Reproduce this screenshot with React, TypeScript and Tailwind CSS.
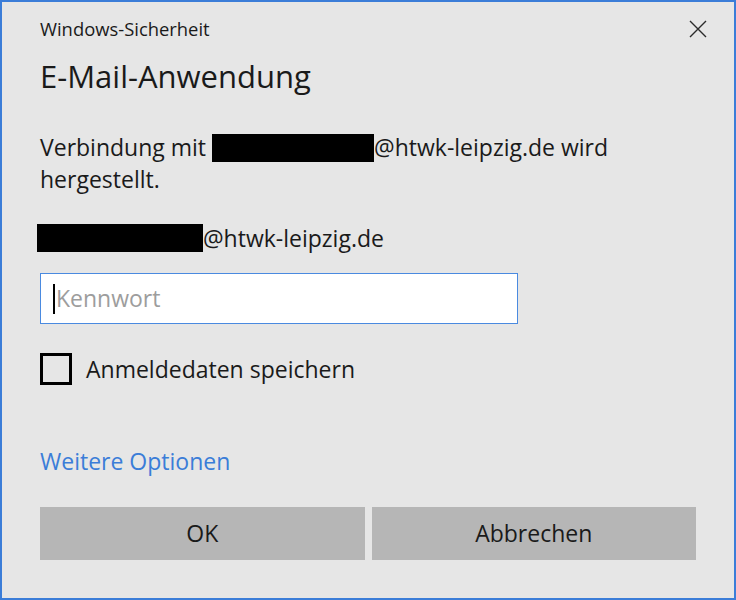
function CloseIcon() {
  return (
    <svg width="18" height="18" viewBox="0 0 18 18" className="text-[#2b2b2b]">
      <path d="M1 1L17 17M17 1L1 17" stroke="currentColor" strokeWidth="1.4" fill="none" />
    </svg>
  );
}

export default function App() {
  return (
    <div
      className="flex h-[600px] w-[736px] flex-col border-2 border-[#3b7dd8] bg-[#e6e6e6] text-[#1a1a1a]"
      style={{ fontFamily: '"Open Sans", "Noto Sans", sans-serif' }}
    >
      {/* Title bar */}
      <div className="flex h-[53px] items-center justify-between pl-[38px] pr-[27px]">
        <span className="text-[18.4px]">Windows-Sicherheit</span>
        <CloseIcon />
      </div>

      <div className="flex flex-1 flex-col px-[38px]">
        <h1 className="text-[31px] leading-[42px]">E-Mail-Anwendung</h1>

        <p className="mt-[31px] text-[23px] leading-[32px]">
          Verbindung mit{" "}
          <span className="inline-block h-[28px] w-[162px] translate-y-[6px] bg-black" />
          @htwk-leipzig.de wird
          <br />
          hergestellt.
        </p>

        <div className="mt-[27px] flex h-[32px] items-center text-[23px] leading-[32px]">
          <span className="-ml-[3px] inline-block h-[28px] w-[166px] bg-black" />
          @htwk-leipzig.de
        </div>

        <div className="mt-[19px] flex h-[51px] w-[478px] items-center border border-[#4a8ae0] bg-white pl-[12px]">
          <span className="h-[30px] w-[2px] bg-black" />
          <span className="ml-[1px] text-[23px] text-[#9d9d9d]">Kennwort</span>
        </div>

        <label className="mt-[29px] flex h-[32px] items-center gap-[14px]">
          <span className="h-[32px] w-[32px] border-[3px] border-black" />
          <span className="text-[23px] leading-[32px]">Anmeldedaten speichern</span>
        </label>

        <a className="mt-[60px] text-[23px] leading-[32px] text-[#3b7dd8]">Weitere Optionen</a>

        <div className="mt-[30px] grid grid-cols-2 gap-[7px]">
          <button type="button" className="h-[53px] bg-[#b6b6b6] text-[23px]">
            OK
          </button>
          <button type="button" className="h-[53px] bg-[#b6b6b6] text-[23px]">
            Abbrechen
          </button>
        </div>
      </div>
    </div>
  );
}
